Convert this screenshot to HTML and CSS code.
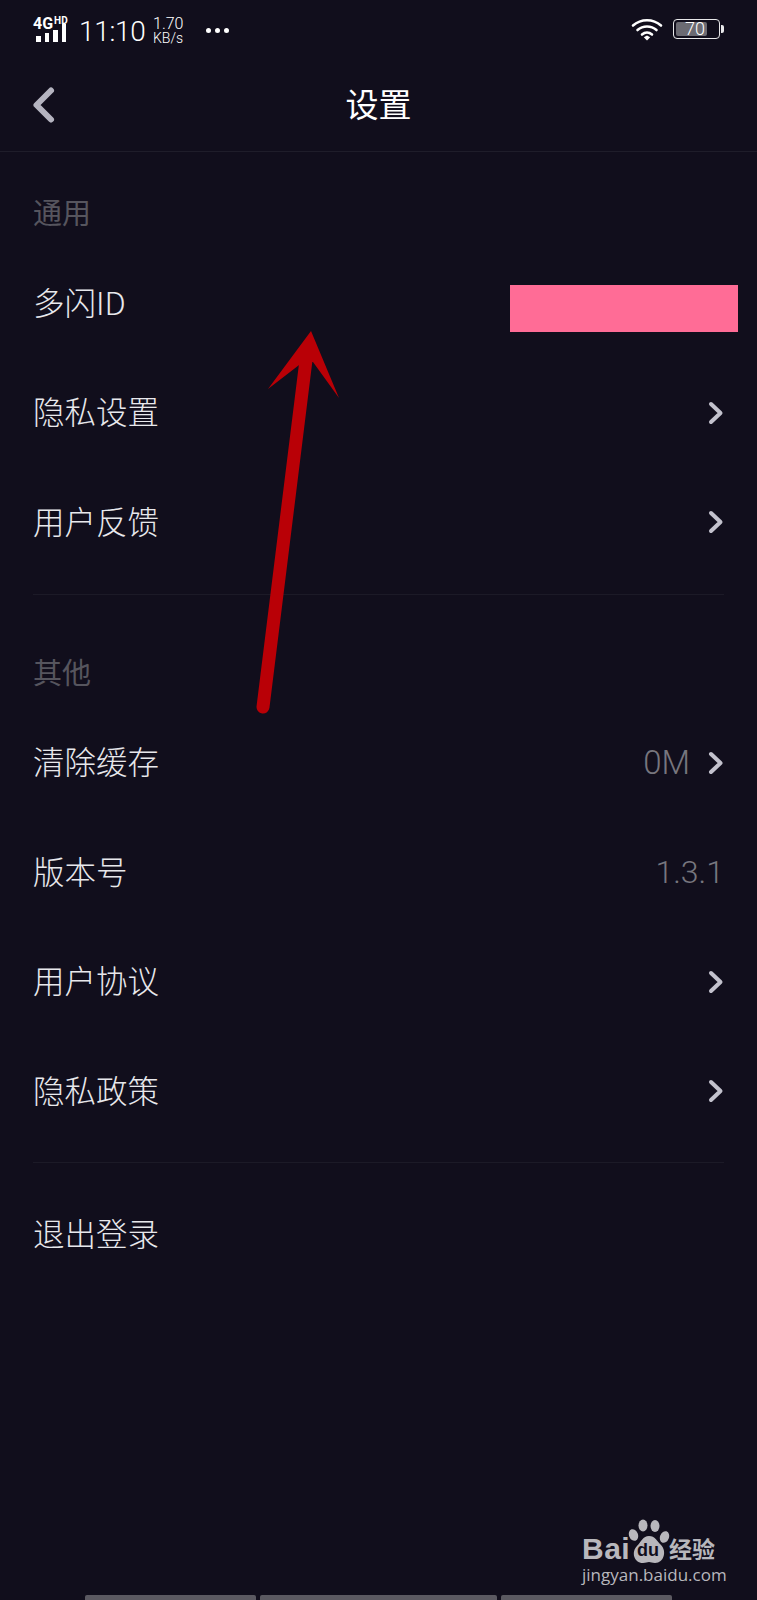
FILE: index.html
```html
<!DOCTYPE html>
<html>
<head>
    <title>设置</title>
    <link rel="stylesheet" href="styles.css">
</head>
<body>
    <div class="screen">
        <!-- status bar -->
        <div class="status">
            <div class="status-left">
                <div class="signal">
                    <div class="net"><span class="net-4g">4G</span><span class="net-hd">HD</span></div>
                    <div class="bars"><i class="b1"></i><i class="b2"></i><i class="b3"></i><i class="b4"></i></div>
                </div>
                <span class="clock">11:10</span>
                <div class="speed"><span class="speed-num">1.70</span><span class="speed-unit">KB/s</span></div>
                <div class="dots"><i></i><i></i><i></i></div>
            </div>
            <div class="status-right">
                <svg class="wifi" width="32" height="24" viewBox="0 0 32 24">
                    <path d="M2 8.5C10 1.5 22 1.5 30 8.5" fill="none" stroke="#fff" stroke-width="2.6" stroke-linecap="round"/>
                    <path d="M6.5 13C12 8.3 20 8.3 25.5 13" fill="none" stroke="#fff" stroke-width="2.6" stroke-linecap="round"/>
                    <path d="M11 17.5C14 15 18 15 21 17.5" fill="none" stroke="#fff" stroke-width="2.6" stroke-linecap="round"/>
                    <path d="M12.8 20.3L16 18.5L19.2 20.3L16 23.5Z" fill="#fff"/>
                </svg>
                <div class="battery">
                    <div class="battery-level"></div>
                    <span class="battery-num">70</span>
                </div>
                <div class="battery-tip"></div>
            </div>
        </div>

        <!-- title bar -->
        <div class="nav">
            <svg class="back" width="30" height="40" viewBox="0 0 30 40">
                <path d="M21 6.5L6.5 21L21 35.5" fill="none" stroke="#b5b4c0" stroke-width="6" stroke-linecap="round" stroke-linejoin="round"/>
            </svg>
            <h1>设置</h1>
        </div>

        <div class="group first">
            <div class="group-title">通用</div>
            <div class="row">
                <span class="label">多闪ID</span>
                <div class="mask"></div>
            </div>
            <div class="row">
                <span class="label">隐私设置</span>
                <svg class="chev" width="16" height="24" viewBox="0 0 16 24"><path d="M3 3L12.5 12L3 21" fill="none" stroke="#c3c2cd" stroke-width="4" stroke-linecap="round" stroke-linejoin="round"/></svg>
            </div>
            <div class="row">
                <span class="label">用户反馈</span>
                <svg class="chev" width="16" height="24" viewBox="0 0 16 24"><path d="M3 3L12.5 12L3 21" fill="none" stroke="#c3c2cd" stroke-width="4" stroke-linecap="round" stroke-linejoin="round"/></svg>
            </div>
        </div>

        <div class="group">
            <div class="group-title">其他</div>
            <div class="row">
                <span class="label">清除缓存</span>
                <div class="row-right">
                    <span class="value">0M</span>
                    <svg class="chev" width="16" height="24" viewBox="0 0 16 24"><path d="M3 3L12.5 12L3 21" fill="none" stroke="#c3c2cd" stroke-width="4" stroke-linecap="round" stroke-linejoin="round"/></svg>
                </div>
            </div>
            <div class="row">
                <span class="label">版本号</span>
                <span class="value">1.3.1</span>
            </div>
            <div class="row">
                <span class="label">用户协议</span>
                <svg class="chev" width="16" height="24" viewBox="0 0 16 24"><path d="M3 3L12.5 12L3 21" fill="none" stroke="#c3c2cd" stroke-width="4" stroke-linecap="round" stroke-linejoin="round"/></svg>
            </div>
            <div class="row">
                <span class="label">隐私政策</span>
                <svg class="chev" width="16" height="24" viewBox="0 0 16 24"><path d="M3 3L12.5 12L3 21" fill="none" stroke="#c3c2cd" stroke-width="4" stroke-linecap="round" stroke-linejoin="round"/></svg>
            </div>
        </div>

        <div class="group last">
            <div class="row">
                <span class="label">退出登录</span>
            </div>
        </div>

        <!-- red annotation arrow drawn over the screenshot -->
        <svg class="arrow" width="757" height="1600" viewBox="0 0 757 1600">
            <path d="M263 707L307 352" fill="none" stroke="#b90006" stroke-width="13" stroke-linecap="round"/>
            <path d="M311 331L339 398L313 362L303 362L268 389Z" fill="#b90006"/>
        </svg>

        <!-- watermark -->
        <div class="mark">
            <div class="mark-top">
                <span class="mark-bai">Bai</span>
                <div class="paw">
                    <svg width="42" height="46" viewBox="0 0 42 46">
                        <ellipse cx="15" cy="6.5" rx="4.5" ry="6" fill="#b8b7bc"/>
                        <ellipse cx="27" cy="7" rx="4.5" ry="6" fill="#b8b7bc"/>
                        <ellipse cx="5.5" cy="16" rx="4.5" ry="6" fill="#b8b7bc" transform="rotate(-20 5.5 16)"/>
                        <ellipse cx="36.5" cy="18" rx="4.5" ry="6" fill="#b8b7bc" transform="rotate(20 36.5 18)"/>
                        <path d="M21 17C27 17 29 22 33 26C39 32 36 44 27 44C24 44 23 43 21 43C19 43 18 44 15 44C6 44 3 33 9 27C13 23 15 17 21 17Z" fill="#b8b7bc"/>
                    </svg>
                    <span class="paw-du">du</span>
                </div>
                <span class="mark-jy">经验</span>
            </div>
            <div class="mark-url">jingyan.baidu.com</div>
        </div>

        <!-- bottom edge -->
        <div class="tabs"><i class="t1"></i><i class="t2"></i><i class="t3"></i></div>
    </div>
</body>
</html>
```

FILE: styles.css
```css
* {
    margin: 0;
    padding: 0;
    box-sizing: border-box;
}

body {
    background-color: #110e1c;
    font-family: "Noto Sans CJK SC", "Liberation Sans", sans-serif;
}

.screen {
    position: relative;
    width: 757px;
    height: 1600px;
    overflow: hidden;
    background-color: #110e1c;
    color: #e8e8ec;
}

/* status bar */
.status {
    height: 56px;
    padding: 16px 33px 0 33px;
    display: flex;
    justify-content: space-between;
    align-items: flex-start;
    color: #fff;
    font-family: Roboto, "Liberation Sans", sans-serif;
}

.status-left {
    display: flex;
    align-items: center;
    height: 29px;
}

.signal {
    width: 37px;
    height: 27px;
}

.net {
    display: flex;
    height: 14px;
    line-height: 14px;
    font-weight: 700;
}

.net-4g {
    font-size: 16px;
}

.net-hd {
    font-size: 10px;
    line-height: 8px;
    margin-left: 1px;
}

.bars {
    display: flex;
    align-items: flex-end;
    gap: 4px;
    height: 11px;
    margin: 0 0 0 3px;
}

.bars i {
    display: block;
    flex: none;
    width: 4.5px;
    background-color: #fff;
}

.b1 { height: 6px; }
.b2 { height: 9px; }
.b3 { height: 12px; }
.b4 { height: 18px; }

.clock {
    margin-left: 9px;
    font-size: 28px;
    line-height: 29px;
    font-weight: 300;
    letter-spacing: -0.3px;
    width: 74px;
    padding-top: 1px;
}

.speed {
    display: flex;
    flex-direction: column;
    align-items: flex-start;
    width: 53px;
}

.speed-num {
    font-size: 16px;
    line-height: 15px;
    font-weight: 300;
}

.speed-unit {
    font-size: 14px;
    line-height: 14px;
    font-weight: 300;
}

.dots {
    display: flex;
    gap: 4px;
}

.dots i {
    display: block;
    width: 5px;
    height: 5px;
    border-radius: 50%;
    background-color: #fff;
}

.status-right {
    display: flex;
    align-items: center;
    height: 26px;
}

.wifi {
    margin-right: 10px;
}

.battery {
    position: relative;
    width: 47px;
    height: 20px;
    padding: 2px;
    border: 1.5px solid #e8e8ea;
    border-radius: 4px;
}

.battery-level {
    width: 31px;
    height: 100%;
    background-color: #6b6a72;
    border-radius: 2px;
}

.battery-num {
    position: absolute;
    top: -1px;
    left: 11px;
    font-size: 18px;
    line-height: 20px;
    font-weight: 300;
    color: #fff;
}

.battery-tip {
    width: 3px;
    height: 8px;
    margin-left: 1px;
    background-color: #e8e8ea;
    border-radius: 0 2px 2px 0;
}

/* title bar */
.nav {
    position: relative;
    height: 96px;
    display: flex;
    align-items: center;
    justify-content: center;
    border-bottom: 1px solid #1f1d2a;
}

.back {
    position: absolute;
    left: 30px;
    top: 28px;
}

.nav h1 {
    font-size: 33px;
    line-height: 44px;
    font-weight: 400;
    color: #fff;
    margin-top: -2px;
}

/* setting groups */
.group {
    margin: 0 33px;
    padding-bottom: 17px;
    border-bottom: 1px solid #1c1a27;
}

.group.first {
    padding-bottom: 18px;
}

.group.last {
    padding-top: 16px;
    border-bottom: none;
}

.group-title {
    height: 112px;
    padding-bottom: 16px;
    display: flex;
    align-items: flex-end;
    font-size: 29px;
    line-height: 40px;
    font-weight: 400;
    color: #56555e;
}

.group.first .group-title {
    height: 95px;
}

.row {
    position: relative;
    height: 109.5px;
    display: flex;
    align-items: center;
    justify-content: space-between;
    font-size: 31.5px;
    line-height: 44px;
    font-weight: 300;
}

.label {
    margin-bottom: 2px;
}

.row-right {
    display: flex;
    align-items: center;
}

.value {
    font-family: Roboto, "Liberation Sans", sans-serif;
    font-size: 32px;
    font-weight: 300;
    color: #77767e;
    padding-top: 3px;
}

.row-right .value {
    margin-right: 18px;
    font-size: 33px;
}

.chev {
    display: block;
    margin-top: 3px;
}

.mask {
    position: absolute;
    left: 477px;
    top: 38px;
    width: 228px;
    height: 47px;
    background-color: #ff6c96;
}

/* arrow overlay */
.arrow {
    position: absolute;
    left: 0;
    top: 0;
}

/* watermark */
.mark {
    position: absolute;
    left: 582px;
    top: 1519px;
    width: 140px;
    color: #b8b7bc;
}

.mark-top {
    display: flex;
    align-items: flex-end;
    height: 45px;
}

.mark-bai {
    font-family: "Liberation Sans", sans-serif;
    font-weight: 700;
    font-size: 30px;
    line-height: 31px;
    width: 46px;
    letter-spacing: 0.5px;
}

.paw {
    position: relative;
    width: 41px;
    height: 45px;
}

.paw-du {
    position: absolute;
    left: 9px;
    top: 21px;
    font-family: "Liberation Sans", sans-serif;
    font-weight: 700;
    font-size: 18px;
    line-height: 20px;
    color: #110e1c;
}

.mark-jy {
    font-size: 23px;
    line-height: 32px;
    font-weight: 700;
}

.mark-url {
    font-family: "Open Sans", "Liberation Sans", sans-serif;
    font-size: 17px;
    line-height: 20px;
    margin-top: 1px;
    white-space: nowrap;
}

/* cut off bars at the bottom edge */
.tabs {
    position: absolute;
    left: 85px;
    bottom: 0;
    display: flex;
    gap: 4px;
    height: 5px;
}

.tabs i {
    display: block;
    background-color: #5b5961;
    border-radius: 2px 2px 0 0;
}

.t1 { width: 171px; }
.t2 { width: 237px; }
.t3 { width: 171px; }
```
